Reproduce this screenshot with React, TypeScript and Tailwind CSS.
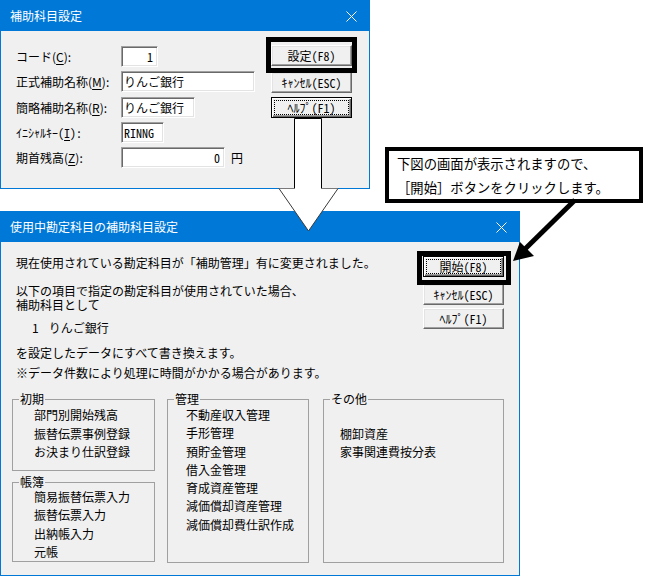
import React from "react";

const FONT = "font-[family-name:'Noto_Sans_CJK_JP',sans-serif]";
const MONO = "font-[family-name:'Noto_Sans_Mono_CJK_JP','Noto_Sans_CJK_JP',monospace]";

function CloseGlyph() {
  return (
    <svg width="11" height="11" viewBox="0 0 11 11" aria-hidden="true">
      <path d="M0.5 0.5L10.5 10.5M10.5 0.5L0.5 10.5" stroke="#ffffff" strokeWidth="1" />
    </svg>
  );
}

function TitleBar({ title }: { title: string }) {
  return (
    <header className="flex h-[30px] shrink-0 items-center bg-[#0078d7] pl-[9px] pr-[12px] text-[12px] text-white">
      <span>{title}</span>
      <span className="ml-auto flex">
        <CloseGlyph />
      </span>
    </header>
  );
}

function PushButton({ children, focused }: { children: React.ReactNode; focused?: boolean }) {
  return focused ? (
    <button
      type="button"
      className={
        MONO +
        " flex h-[21px] w-[81px] items-center justify-center border border-black bg-[#f0f0f0] text-[12px] leading-none text-black shadow-[inset_1px_1px_0_#ffffff,inset_-1px_-1px_0_#696969,inset_-2px_-2px_0_#a0a0a0] outline-1 outline-dotted outline-black outline-offset-[-4px]"
      }
    >
      {children}
    </button>
  ) : (
    <button
      type="button"
      className={
        MONO +
        " flex h-[21px] w-[81px] items-center justify-center border border-t-white border-l-white border-r-[#696969] border-b-[#696969] bg-[#f0f0f0] text-[12px] leading-none text-black shadow-[inset_-1px_-1px_0_#a0a0a0,inset_1px_1px_0_#e3e3e3]"
      }
    >
      {children}
    </button>
  );
}

function Field({ width, right, mono, children }: { width: string; right?: boolean; mono?: boolean; children: React.ReactNode }) {
  return (
    <div
      className={
        (right ? "justify-end pr-[4px] " : "justify-start pl-[2px] ") +
        (mono ? MONO + " " : "") +
        width +
        " flex h-[21px] items-center border border-t-[#a0a0a0] border-l-[#a0a0a0] border-r-white border-b-white bg-white text-[12px] leading-none shadow-[inset_1px_1px_0_#696969,inset_-1px_-1px_0_#e3e3e3]"
      }
    >
      {children}
    </div>
  );
}

function Row({
  label,
  keyChar,
  tail,
  mono,
  className,
  children,
}: {
  label: string;
  keyChar: string;
  tail?: React.ReactNode;
  mono?: boolean;
  className: string;
  children: React.ReactNode;
}) {
  return (
    <div className={"flex h-[21px] items-center " + className}>
      <span className={(mono ? MONO + " " : "") + "w-[105px] text-[12px] leading-none"}>
        {label}(<span className="underline underline-offset-2">{keyChar}</span>):
      </span>
      {children}
      {tail}
    </div>
  );
}

function Group({
  title,
  className,
  inset,
  items,
  leading,
}: {
  title: string;
  className: string;
  inset: string;
  items: string[];
  leading: string;
}) {
  return (
    <fieldset className={"border border-[#a0a0a0] " + className}>
      <legend className="ml-[6px] px-[1px] text-[12px] leading-[14px]">{title}</legend>
      <ul className={inset + " " + leading + " text-[12px]"}>
        {items.map((t, i) => (
          <li key={i}>{t === "" ? "\u00a0" : t}</li>
        ))}
      </ul>
    </fieldset>
  );
}

export default function App() {
  return (
    <div className={"relative h-[577px] w-[649px] overflow-hidden bg-white text-black " + FONT}>
      {/* 補助科目設定 */}
      <section className="absolute left-0 top-0 flex h-[189px] w-[370px] flex-col border border-[#0078d7] bg-[#f0f0f0]">
        <TitleBar title="補助科目設定" />
        <div className="flex flex-1">
          <div className="flex flex-col pl-[15px] pt-[15px]">
            <Row label="コード" keyChar="C" className="">
              <Field width="w-[37px]" right mono>
                1
              </Field>
            </Row>
            <Row label="正式補助名称" keyChar="M" className="mt-[4px]">
              <Field width="w-[134px]">りんご銀行</Field>
            </Row>
            <Row label="簡略補助名称" keyChar="R" className="mt-[5px]">
              <Field width="w-[74px]">りんご銀行</Field>
            </Row>
            <Row label="ｲﾆｼｬﾙｷｰ" keyChar="I" mono className="mt-[4px]">
              <Field width="w-[43px]" mono>
                RINNG
              </Field>
            </Row>
            <Row
              label="期首残高"
              keyChar="Z"
              className="mt-[4px]"
              tail={<span className="ml-[6px] text-[12px] leading-none">円</span>}
            >
              <Field width="w-[104px]" right mono>
                0
              </Field>
            </Row>
          </div>
          <div className="ml-auto mr-[17px] flex flex-col pt-[14px]">
            <PushButton>設定(F8)</PushButton>
            <div className="mt-[6px]">
              <PushButton>ｷｬﾝｾﾙ(ESC)</PushButton>
            </div>
            <div className="mt-[4px]">
              <PushButton focused>ﾍﾙﾌﾟ(F1)</PushButton>
            </div>
          </div>
        </div>
      </section>

      {/* 使用中勘定科目の補助科目設定 */}
      <section className="absolute left-0 top-[211px] flex h-[365px] w-[520px] flex-col border border-[#0078d7] bg-[#f0f0f0]">
        <TitleBar title="使用中勘定科目の補助科目設定" />
        <div className="flex">
          <div className="pl-[15px] pt-[14px] text-[12px] leading-[14px]">
            <p>現在使用されている勘定科目が「補助管理」有に変更されました。</p>
            <p className="mt-[14px]">
              以下の項目で指定の勘定科目が使用されていた場合、
              <br />
              補助科目として
            </p>
            <p className="mt-[9px] pl-[16px]">
              <span>1</span>
              <span className="ml-[10px]">りんご銀行</span>
            </p>
            <p className="mt-[11px]">を設定したデータにすべて書き換えます。</p>
            <p className="mt-[6px]">※データ件数により処理に時間がかかる場合があります。</p>
          </div>
          <div className="ml-auto mr-[15px] flex flex-col pt-[14px]">
            <PushButton focused>開始(F8)</PushButton>
            <div className="mt-[7px]">
              <PushButton>ｷｬﾝｾﾙ(ESC)</PushButton>
            </div>
            <div className="mt-[3px]">
              <PushButton>ﾍﾙﾌﾟ(F1)</PushButton>
            </div>
          </div>
        </div>
        <div className="mt-[12px] flex pl-[11px]">
          <div className="flex w-[143px] flex-col">
            <Group
              title="初期"
              className="h-[79px] w-[143px]"
              inset="pl-[21px]"
              leading="leading-[18.5px]"
              items={["部門別開始残高", "振替伝票事例登録", "お決まり仕訳登録"]}
            />
            <Group
              title="帳簿"
              className="mt-[4px] h-[87px] w-[143px]"
              inset="-mt-[1px] pl-[21px]"
              leading="leading-[18.3px]"
              items={["簡易振替伝票入力", "振替伝票入力", "出納帳入力", "元帳"]}
            />
          </div>
          <Group
            title="管理"
            className="ml-[12px] h-[171px] w-[142px]"
            inset="pl-[18px]"
            leading="leading-[18.3px]"
            items={["不動産収入管理", "手形管理", "預貯金管理", "借入金管理", "育成資産管理", "減価償却資産管理", "減価償却費仕訳作成"]}
          />
          <Group
            title="その他"
            className="ml-[14px] h-[171px] w-[181px]"
            inset="pl-[16px]"
            leading="leading-[18.5px]"
            items={["", "棚卸資産", "家事関連費按分表"]}
          />
        </div>
      </section>

      {/* callout */}
      <div className="absolute left-[385px] top-[147px] h-[56px] w-[258px] border-4 border-black bg-white pl-[8px] pt-[1px] text-[13.33px] leading-[24px]">
        <p>下図の画面が表示されますので、</p>
        <p>［開始］ボタンをクリックします。</p>
      </div>

      {/* highlight frames */}
      <div className="absolute left-[266px] top-[37px] h-[36px] w-[91px] border-[5px] border-black" />
      <div className="absolute left-[417px] top-[251px] h-[34px] w-[94px] border-[5px] border-black" />

      {/* arrows */}
      <svg
        className="pointer-events-none absolute left-0 top-0"
        width="649"
        height="577"
        viewBox="0 0 649 577"
        aria-hidden="true"
      >
        <polygon
          points="294.5,118.5 321.5,118.5 321.5,188.5 338,188.5 308.5,231 279,188.5 294.5,188.5"
          fill="#ffffff"
        />
        <path d="M294.5 188.5V118.5H321.5V188.5" fill="none" stroke="#000000" strokeWidth="1" />
        <path d="M279 188.5H294.5M321.5 188.5H338" fill="none" stroke="#7a7a7a" strokeWidth="1" />
        <path d="M279 188.5L308.5 231L338 188.5" fill="none" stroke="#3a3a3a" strokeWidth="1" />
        <line x1="575" y1="200" x2="524" y2="250" stroke="#000000" strokeWidth="5" />
        <polygon points="513,261 520,242 534,256" fill="#000000" />
      </svg>
    </div>
  );
}
